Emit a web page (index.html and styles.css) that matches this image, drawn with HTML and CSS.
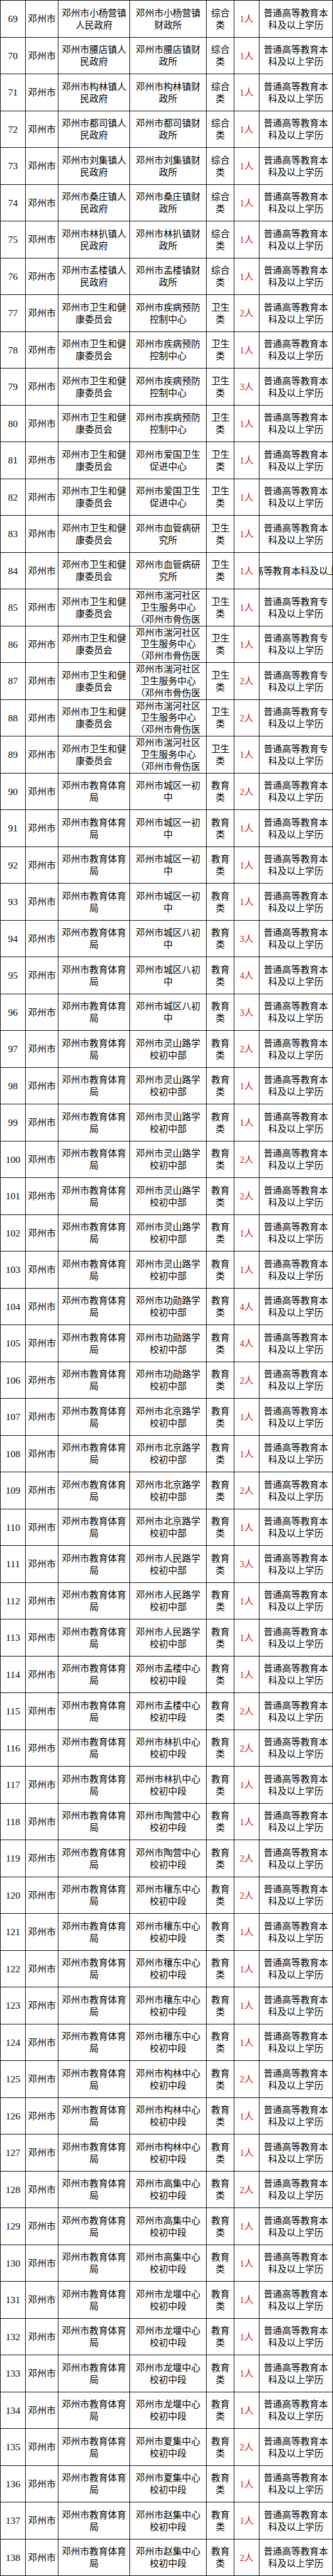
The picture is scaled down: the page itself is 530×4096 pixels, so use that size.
FILE: index.html
```html
<!DOCTYPE html>
<html lang="zh-CN">
<head>
<meta charset="utf-8">
<title>邓州市招聘岗位表</title>
<link rel="stylesheet" href="styles.css">
</head>
<body>
<div class="sheet">
<div class="row"><div class="c n">69</div><div class="c">邓州市</div><div class="c">邓州市小杨营镇人民政府</div><div class="c">邓州市小杨营镇财政所</div><div class="c">综合类</div><div class="c r">1人</div><div class="c">普通高等教育本科及以上学历</div></div>
<div class="row"><div class="c n">70</div><div class="c">邓州市</div><div class="c">邓州市腰店镇人民政府</div><div class="c">邓州市腰店镇财政所</div><div class="c">综合类</div><div class="c r">1人</div><div class="c">普通高等教育本科及以上学历</div></div>
<div class="row"><div class="c n">71</div><div class="c">邓州市</div><div class="c">邓州市构林镇人民政府</div><div class="c">邓州市构林镇财政所</div><div class="c">综合类</div><div class="c r">1人</div><div class="c">普通高等教育本科及以上学历</div></div>
<div class="row"><div class="c n">72</div><div class="c">邓州市</div><div class="c">邓州市都司镇人民政府</div><div class="c">邓州市都司镇财政所</div><div class="c">综合类</div><div class="c r">1人</div><div class="c">普通高等教育本科及以上学历</div></div>
<div class="row"><div class="c n">73</div><div class="c">邓州市</div><div class="c">邓州市刘集镇人民政府</div><div class="c">邓州市刘集镇财政所</div><div class="c">综合类</div><div class="c r">1人</div><div class="c">普通高等教育本科及以上学历</div></div>
<div class="row"><div class="c n">74</div><div class="c">邓州市</div><div class="c">邓州市桑庄镇人民政府</div><div class="c">邓州市桑庄镇财政所</div><div class="c">综合类</div><div class="c r">1人</div><div class="c">普通高等教育本科及以上学历</div></div>
<div class="row"><div class="c n">75</div><div class="c">邓州市</div><div class="c">邓州市林扒镇人民政府</div><div class="c">邓州市林扒镇财政所</div><div class="c">综合类</div><div class="c r">1人</div><div class="c">普通高等教育本科及以上学历</div></div>
<div class="row"><div class="c n">76</div><div class="c">邓州市</div><div class="c">邓州市孟楼镇人民政府</div><div class="c">邓州市孟楼镇财政所</div><div class="c">综合类</div><div class="c r">1人</div><div class="c">普通高等教育本科及以上学历</div></div>
<div class="row"><div class="c n">77</div><div class="c">邓州市</div><div class="c">邓州市卫生和健康委员会</div><div class="c">邓州市疾病预防控制中心</div><div class="c">卫生类</div><div class="c r">2人</div><div class="c">普通高等教育本科及以上学历</div></div>
<div class="row"><div class="c n">78</div><div class="c">邓州市</div><div class="c">邓州市卫生和健康委员会</div><div class="c">邓州市疾病预防控制中心</div><div class="c">卫生类</div><div class="c r">1人</div><div class="c">普通高等教育本科及以上学历</div></div>
<div class="row"><div class="c n">79</div><div class="c">邓州市</div><div class="c">邓州市卫生和健康委员会</div><div class="c">邓州市疾病预防控制中心</div><div class="c">卫生类</div><div class="c r">3人</div><div class="c">普通高等教育本科及以上学历</div></div>
<div class="row"><div class="c n">80</div><div class="c">邓州市</div><div class="c">邓州市卫生和健康委员会</div><div class="c">邓州市疾病预防控制中心</div><div class="c">卫生类</div><div class="c r">1人</div><div class="c">普通高等教育本科及以上学历</div></div>
<div class="row"><div class="c n">81</div><div class="c">邓州市</div><div class="c">邓州市卫生和健康委员会</div><div class="c">邓州市爱国卫生促进中心</div><div class="c">卫生类</div><div class="c r">1人</div><div class="c">普通高等教育本科及以上学历</div></div>
<div class="row"><div class="c n">82</div><div class="c">邓州市</div><div class="c">邓州市卫生和健康委员会</div><div class="c">邓州市爱国卫生促进中心</div><div class="c">卫生类</div><div class="c r">1人</div><div class="c">普通高等教育本科及以上学历</div></div>
<div class="row"><div class="c n">83</div><div class="c">邓州市</div><div class="c">邓州市卫生和健康委员会</div><div class="c">邓州市血管病研究所</div><div class="c">卫生类</div><div class="c r">1人</div><div class="c">普通高等教育本科及以上学历</div></div>
<div class="row"><div class="c n">84</div><div class="c">邓州市</div><div class="c">邓州市卫生和健康委员会</div><div class="c">邓州市血管病研究所</div><div class="c">卫生类</div><div class="c r">1人</div><div class="c clip">普通高等教育本科及以上学历</div></div>
<div class="row"><div class="c n">85</div><div class="c">邓州市</div><div class="c">邓州市卫生和健康委员会</div><div class="c top">邓州市湍河社区卫生服务中心（邓州市骨伤医院）</div><div class="c">卫生类</div><div class="c r">1人</div><div class="c">普通高等教育专科及以上学历</div></div>
<div class="row"><div class="c n">86</div><div class="c">邓州市</div><div class="c">邓州市卫生和健康委员会</div><div class="c top">邓州市湍河社区卫生服务中心（邓州市骨伤医院）</div><div class="c">卫生类</div><div class="c r">1人</div><div class="c">普通高等教育专科及以上学历</div></div>
<div class="row"><div class="c n">87</div><div class="c">邓州市</div><div class="c">邓州市卫生和健康委员会</div><div class="c top">邓州市湍河社区卫生服务中心（邓州市骨伤医院）</div><div class="c">卫生类</div><div class="c r">2人</div><div class="c">普通高等教育专科及以上学历</div></div>
<div class="row"><div class="c n">88</div><div class="c">邓州市</div><div class="c">邓州市卫生和健康委员会</div><div class="c top">邓州市湍河社区卫生服务中心（邓州市骨伤医院）</div><div class="c">卫生类</div><div class="c r">2人</div><div class="c">普通高等教育专科及以上学历</div></div>
<div class="row"><div class="c n">89</div><div class="c">邓州市</div><div class="c">邓州市卫生和健康委员会</div><div class="c top">邓州市湍河社区卫生服务中心（邓州市骨伤医院）</div><div class="c">卫生类</div><div class="c r">1人</div><div class="c">普通高等教育专科及以上学历</div></div>
<div class="row"><div class="c n">90</div><div class="c">邓州市</div><div class="c">邓州市教育体育局</div><div class="c">邓州市城区一初中</div><div class="c">教育类</div><div class="c r">2人</div><div class="c">普通高等教育本科及以上学历</div></div>
<div class="row"><div class="c n">91</div><div class="c">邓州市</div><div class="c">邓州市教育体育局</div><div class="c">邓州市城区一初中</div><div class="c">教育类</div><div class="c r">1人</div><div class="c">普通高等教育本科及以上学历</div></div>
<div class="row"><div class="c n">92</div><div class="c">邓州市</div><div class="c">邓州市教育体育局</div><div class="c">邓州市城区一初中</div><div class="c">教育类</div><div class="c r">1人</div><div class="c">普通高等教育本科及以上学历</div></div>
<div class="row"><div class="c n">93</div><div class="c">邓州市</div><div class="c">邓州市教育体育局</div><div class="c">邓州市城区一初中</div><div class="c">教育类</div><div class="c r">1人</div><div class="c">普通高等教育本科及以上学历</div></div>
<div class="row"><div class="c n">94</div><div class="c">邓州市</div><div class="c">邓州市教育体育局</div><div class="c">邓州市城区八初中</div><div class="c">教育类</div><div class="c r">3人</div><div class="c">普通高等教育本科及以上学历</div></div>
<div class="row"><div class="c n">95</div><div class="c">邓州市</div><div class="c">邓州市教育体育局</div><div class="c">邓州市城区八初中</div><div class="c">教育类</div><div class="c r">4人</div><div class="c">普通高等教育本科及以上学历</div></div>
<div class="row"><div class="c n">96</div><div class="c">邓州市</div><div class="c">邓州市教育体育局</div><div class="c">邓州市城区八初中</div><div class="c">教育类</div><div class="c r">3人</div><div class="c">普通高等教育本科及以上学历</div></div>
<div class="row"><div class="c n">97</div><div class="c">邓州市</div><div class="c">邓州市教育体育局</div><div class="c">邓州市灵山路学校初中部</div><div class="c">教育类</div><div class="c r">2人</div><div class="c">普通高等教育本科及以上学历</div></div>
<div class="row"><div class="c n">98</div><div class="c">邓州市</div><div class="c">邓州市教育体育局</div><div class="c">邓州市灵山路学校初中部</div><div class="c">教育类</div><div class="c r">1人</div><div class="c">普通高等教育本科及以上学历</div></div>
<div class="row"><div class="c n">99</div><div class="c">邓州市</div><div class="c">邓州市教育体育局</div><div class="c">邓州市灵山路学校初中部</div><div class="c">教育类</div><div class="c r">1人</div><div class="c">普通高等教育本科及以上学历</div></div>
<div class="row"><div class="c n">100</div><div class="c">邓州市</div><div class="c">邓州市教育体育局</div><div class="c">邓州市灵山路学校初中部</div><div class="c">教育类</div><div class="c r">2人</div><div class="c">普通高等教育本科及以上学历</div></div>
<div class="row"><div class="c n">101</div><div class="c">邓州市</div><div class="c">邓州市教育体育局</div><div class="c">邓州市灵山路学校初中部</div><div class="c">教育类</div><div class="c r">2人</div><div class="c">普通高等教育本科及以上学历</div></div>
<div class="row"><div class="c n">102</div><div class="c">邓州市</div><div class="c">邓州市教育体育局</div><div class="c">邓州市灵山路学校初中部</div><div class="c">教育类</div><div class="c r">1人</div><div class="c">普通高等教育本科及以上学历</div></div>
<div class="row"><div class="c n">103</div><div class="c">邓州市</div><div class="c">邓州市教育体育局</div><div class="c">邓州市灵山路学校初中部</div><div class="c">教育类</div><div class="c r">1人</div><div class="c">普通高等教育本科及以上学历</div></div>
<div class="row"><div class="c n">104</div><div class="c">邓州市</div><div class="c">邓州市教育体育局</div><div class="c">邓州市功勋路学校初中部</div><div class="c">教育类</div><div class="c r">4人</div><div class="c">普通高等教育本科及以上学历</div></div>
<div class="row"><div class="c n">105</div><div class="c">邓州市</div><div class="c">邓州市教育体育局</div><div class="c">邓州市功勋路学校初中部</div><div class="c">教育类</div><div class="c r">4人</div><div class="c">普通高等教育本科及以上学历</div></div>
<div class="row"><div class="c n">106</div><div class="c">邓州市</div><div class="c">邓州市教育体育局</div><div class="c">邓州市功勋路学校初中部</div><div class="c">教育类</div><div class="c r">2人</div><div class="c">普通高等教育本科及以上学历</div></div>
<div class="row"><div class="c n">107</div><div class="c">邓州市</div><div class="c">邓州市教育体育局</div><div class="c">邓州市北京路学校初中部</div><div class="c">教育类</div><div class="c r">1人</div><div class="c">普通高等教育本科及以上学历</div></div>
<div class="row"><div class="c n">108</div><div class="c">邓州市</div><div class="c">邓州市教育体育局</div><div class="c">邓州市北京路学校初中部</div><div class="c">教育类</div><div class="c r">1人</div><div class="c">普通高等教育本科及以上学历</div></div>
<div class="row"><div class="c n">109</div><div class="c">邓州市</div><div class="c">邓州市教育体育局</div><div class="c">邓州市北京路学校初中部</div><div class="c">教育类</div><div class="c r">2人</div><div class="c">普通高等教育本科及以上学历</div></div>
<div class="row"><div class="c n">110</div><div class="c">邓州市</div><div class="c">邓州市教育体育局</div><div class="c">邓州市北京路学校初中部</div><div class="c">教育类</div><div class="c r">1人</div><div class="c">普通高等教育本科及以上学历</div></div>
<div class="row"><div class="c n">111</div><div class="c">邓州市</div><div class="c">邓州市教育体育局</div><div class="c">邓州市人民路学校初中部</div><div class="c">教育类</div><div class="c r">3人</div><div class="c">普通高等教育本科及以上学历</div></div>
<div class="row"><div class="c n">112</div><div class="c">邓州市</div><div class="c">邓州市教育体育局</div><div class="c">邓州市人民路学校初中部</div><div class="c">教育类</div><div class="c r">1人</div><div class="c">普通高等教育本科及以上学历</div></div>
<div class="row"><div class="c n">113</div><div class="c">邓州市</div><div class="c">邓州市教育体育局</div><div class="c">邓州市人民路学校初中部</div><div class="c">教育类</div><div class="c r">1人</div><div class="c">普通高等教育本科及以上学历</div></div>
<div class="row"><div class="c n">114</div><div class="c">邓州市</div><div class="c">邓州市教育体育局</div><div class="c">邓州市孟楼中心校初中段</div><div class="c">教育类</div><div class="c r">1人</div><div class="c">普通高等教育本科及以上学历</div></div>
<div class="row"><div class="c n">115</div><div class="c">邓州市</div><div class="c">邓州市教育体育局</div><div class="c">邓州市孟楼中心校初中段</div><div class="c">教育类</div><div class="c r">2人</div><div class="c">普通高等教育本科及以上学历</div></div>
<div class="row"><div class="c n">116</div><div class="c">邓州市</div><div class="c">邓州市教育体育局</div><div class="c">邓州市林扒中心校初中段</div><div class="c">教育类</div><div class="c r">2人</div><div class="c">普通高等教育本科及以上学历</div></div>
<div class="row"><div class="c n">117</div><div class="c">邓州市</div><div class="c">邓州市教育体育局</div><div class="c">邓州市林扒中心校初中段</div><div class="c">教育类</div><div class="c r">1人</div><div class="c">普通高等教育本科及以上学历</div></div>
<div class="row"><div class="c n">118</div><div class="c">邓州市</div><div class="c">邓州市教育体育局</div><div class="c">邓州市陶营中心校初中段</div><div class="c">教育类</div><div class="c r">1人</div><div class="c">普通高等教育本科及以上学历</div></div>
<div class="row"><div class="c n">119</div><div class="c">邓州市</div><div class="c">邓州市教育体育局</div><div class="c">邓州市陶营中心校初中段</div><div class="c">教育类</div><div class="c r">2人</div><div class="c">普通高等教育本科及以上学历</div></div>
<div class="row"><div class="c n">120</div><div class="c">邓州市</div><div class="c">邓州市教育体育局</div><div class="c">邓州市穰东中心校初中段</div><div class="c">教育类</div><div class="c r">2人</div><div class="c">普通高等教育本科及以上学历</div></div>
<div class="row"><div class="c n">121</div><div class="c">邓州市</div><div class="c">邓州市教育体育局</div><div class="c">邓州市穰东中心校初中段</div><div class="c">教育类</div><div class="c r">1人</div><div class="c">普通高等教育本科及以上学历</div></div>
<div class="row"><div class="c n">122</div><div class="c">邓州市</div><div class="c">邓州市教育体育局</div><div class="c">邓州市穰东中心校初中段</div><div class="c">教育类</div><div class="c r">1人</div><div class="c">普通高等教育本科及以上学历</div></div>
<div class="row"><div class="c n">123</div><div class="c">邓州市</div><div class="c">邓州市教育体育局</div><div class="c">邓州市穰东中心校初中段</div><div class="c">教育类</div><div class="c r">1人</div><div class="c">普通高等教育本科及以上学历</div></div>
<div class="row"><div class="c n">124</div><div class="c">邓州市</div><div class="c">邓州市教育体育局</div><div class="c">邓州市穰东中心校初中段</div><div class="c">教育类</div><div class="c r">1人</div><div class="c">普通高等教育本科及以上学历</div></div>
<div class="row"><div class="c n">125</div><div class="c">邓州市</div><div class="c">邓州市教育体育局</div><div class="c">邓州市构林中心校初中段</div><div class="c">教育类</div><div class="c r">2人</div><div class="c">普通高等教育本科及以上学历</div></div>
<div class="row"><div class="c n">126</div><div class="c">邓州市</div><div class="c">邓州市教育体育局</div><div class="c">邓州市构林中心校初中段</div><div class="c">教育类</div><div class="c r">1人</div><div class="c">普通高等教育本科及以上学历</div></div>
<div class="row"><div class="c n">127</div><div class="c">邓州市</div><div class="c">邓州市教育体育局</div><div class="c">邓州市构林中心校初中段</div><div class="c">教育类</div><div class="c r">1人</div><div class="c">普通高等教育本科及以上学历</div></div>
<div class="row"><div class="c n">128</div><div class="c">邓州市</div><div class="c">邓州市教育体育局</div><div class="c">邓州市高集中心校初中段</div><div class="c">教育类</div><div class="c r">2人</div><div class="c">普通高等教育本科及以上学历</div></div>
<div class="row"><div class="c n">129</div><div class="c">邓州市</div><div class="c">邓州市教育体育局</div><div class="c">邓州市高集中心校初中段</div><div class="c">教育类</div><div class="c r">1人</div><div class="c">普通高等教育本科及以上学历</div></div>
<div class="row"><div class="c n">130</div><div class="c">邓州市</div><div class="c">邓州市教育体育局</div><div class="c">邓州市高集中心校初中段</div><div class="c">教育类</div><div class="c r">1人</div><div class="c">普通高等教育本科及以上学历</div></div>
<div class="row"><div class="c n">131</div><div class="c">邓州市</div><div class="c">邓州市教育体育局</div><div class="c">邓州市龙堰中心校初中段</div><div class="c">教育类</div><div class="c r">1人</div><div class="c">普通高等教育本科及以上学历</div></div>
<div class="row"><div class="c n">132</div><div class="c">邓州市</div><div class="c">邓州市教育体育局</div><div class="c">邓州市龙堰中心校初中段</div><div class="c">教育类</div><div class="c r">1人</div><div class="c">普通高等教育本科及以上学历</div></div>
<div class="row"><div class="c n">133</div><div class="c">邓州市</div><div class="c">邓州市教育体育局</div><div class="c">邓州市龙堰中心校初中段</div><div class="c">教育类</div><div class="c r">1人</div><div class="c">普通高等教育本科及以上学历</div></div>
<div class="row"><div class="c n">134</div><div class="c">邓州市</div><div class="c">邓州市教育体育局</div><div class="c">邓州市龙堰中心校初中段</div><div class="c">教育类</div><div class="c r">1人</div><div class="c">普通高等教育本科及以上学历</div></div>
<div class="row"><div class="c n">135</div><div class="c">邓州市</div><div class="c">邓州市教育体育局</div><div class="c">邓州市夏集中心校初中段</div><div class="c">教育类</div><div class="c r">2人</div><div class="c">普通高等教育本科及以上学历</div></div>
<div class="row"><div class="c n">136</div><div class="c">邓州市</div><div class="c">邓州市教育体育局</div><div class="c">邓州市夏集中心校初中段</div><div class="c">教育类</div><div class="c r">1人</div><div class="c">普通高等教育本科及以上学历</div></div>
<div class="row"><div class="c n">137</div><div class="c">邓州市</div><div class="c">邓州市教育体育局</div><div class="c">邓州市赵集中心校初中段</div><div class="c">教育类</div><div class="c r">1人</div><div class="c">普通高等教育本科及以上学历</div></div>
<div class="row"><div class="c n">138</div><div class="c">邓州市</div><div class="c">邓州市教育体育局</div><div class="c">邓州市赵集中心校初中段</div><div class="c">教育类</div><div class="c r">2人</div><div class="c">普通高等教育本科及以上学历</div></div>
</div>
</body>
</html>
```

FILE: styles.css
```css
html, body {
  margin: 0;
  padding: 0;
  background: #ffffff;
}

.sheet {
  width: 530px;
  box-sizing: border-box;
  border-top: 1px solid #111;
  border-left: 1px solid #111;
  font-family: "Liberation Serif", "Noto Sans CJK SC", serif;
  color: #000;
}

.row {
  display: grid;
  grid-template-columns: 40.2px 51.8px 114.2px 121.7px 44.6px 39.2px 117.3px;
  height: 58.5px;
}

.c {
  box-sizing: border-box;
  border-right: 1px solid #111;
  border-bottom: 1px solid #111;
  display: flex;
  align-items: center;
  justify-content: center;
  text-align: center;
  overflow: hidden;
  min-width: 0;
  padding: 2px 3px 0;
  font-size: 14.7px;
  line-height: 18.8px;
}

.n {
  font-size: 15.5px;
  padding-left: 1px;
  padding-right: 1px;
}

.r {
  color: #cc1414;
  padding-left: 1px;
  padding-right: 1px;
}

.top {
  align-items: flex-start;
  padding-top: 1px;
}

.clip {
  white-space: nowrap;
}
```
